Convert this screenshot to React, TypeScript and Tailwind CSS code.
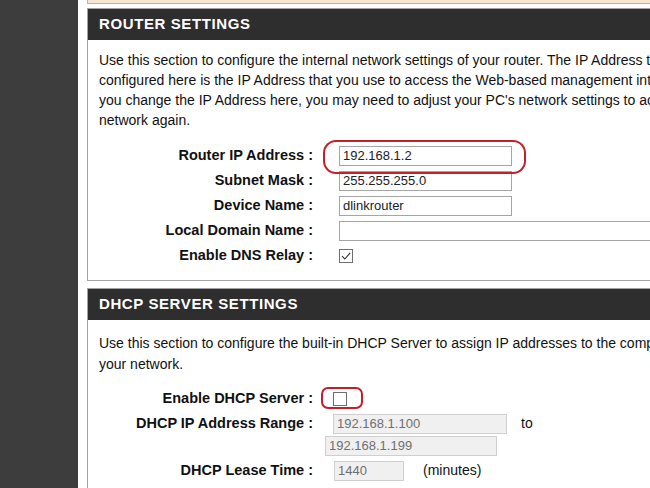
import type { ReactNode } from 'react'

function Section({ title, className, children }: { title: string; className?: string; children: ReactNode }) {
  return (
    <section className={`w-[720px] shrink-0 border border-[#a3a3a3] ${className ?? ''}`}>
      <div className="flex h-[31px] items-center bg-[#2e2e2e] pl-[11px] text-[15px] font-bold tracking-[0.6px] text-white">
        {title}
      </div>
      {children}
    </section>
  )
}

function Row({ label, children, className }: { label: string; children?: ReactNode; className?: string }) {
  return (
    <div className={`flex ${className ?? 'h-[25px] items-center'}`}>
      <div className="w-[225px] shrink-0 whitespace-nowrap text-right text-[14.5px] font-bold text-[#111]">{label}</div>
      {children}
    </div>
  )
}

function TextBox({ value, width, disabled }: { value: string; width: string; disabled?: boolean }) {
  return (
    <div
      className={`flex h-[20px] items-center whitespace-nowrap border px-[3px] text-[13px] ${width} ${
        disabled ? 'border-[#cfcfcf] bg-[#f0f0f0] text-[#6f6f6f]' : 'border-[#a5a5a5] bg-white text-[#222]'
      }`}
    >
      {value}
    </div>
  )
}

function CheckBox({ checked }: { checked?: boolean }) {
  return (
    <span className="flex h-[14px] w-[14px] items-center justify-center border border-[#6f6f6f] bg-white">
      {checked && (
        <svg width="12" height="12" viewBox="0 0 12 12" fill="none">
          <path d="M2 6.2 L4.8 9 L10.2 2.8" stroke="#333" strokeWidth="1.1" />
        </svg>
      )}
    </span>
  )
}

export default function App() {
  return (
    <div className="flex h-[488px] w-[650px] overflow-hidden bg-white font-['Liberation_Sans',Arial,sans-serif] text-[#111]">
      <aside className="w-[78px] shrink-0 bg-[#3d3d3d]" />

      <main className="flex min-w-0 flex-1 flex-col overflow-hidden pl-[9px]">
        {/* status strip above */}
        <div className="h-[4px] w-[720px] shrink-0 border-b border-l border-[#d2ac8c] bg-[#f7e5d6]" />

        {/* Router settings */}
        <Section title="ROUTER SETTINGS" className="mt-[4px]">
          <div className="px-[11px] pt-[10px] text-[14px] leading-[20px]">
            <p className="whitespace-nowrap">
              Use this section to configure the internal network settings of your router. The IP Address that is
            </p>
            <p className="whitespace-nowrap">
              configured here is the IP Address that you use to access the Web-based management interface. If
            </p>
            <p className="whitespace-nowrap">
              you change the IP Address here, you may need to adjust your PC's network settings to access the
            </p>
            <p className="whitespace-nowrap">network again.</p>
          </div>

          <div className="mt-[13px] pb-[12px]">
            <Row label="Router IP Address :">
              <div className="relative ml-[26px]">
                <TextBox value="192.168.1.2" width="w-[173px]" />
                <span className="absolute -left-[16px] -top-[6px] h-[34px] w-[203px] rounded-[13px] border-2 border-[#c3202c]" />
              </div>
            </Row>
            <Row label="Subnet Mask :">
              <div className="ml-[26px]">
                <TextBox value="255.255.255.0" width="w-[173px]" />
              </div>
            </Row>
            <Row label="Device Name :">
              <div className="ml-[26px]">
                <TextBox value="dlinkrouter" width="w-[173px]" />
              </div>
            </Row>
            <Row label="Local Domain Name :">
              <div className="ml-[26px]">
                <TextBox value="" width="w-[340px]" />
              </div>
            </Row>
            <Row label="Enable DNS Relay :">
              <div className="ml-[26px]">
                <CheckBox checked />
              </div>
            </Row>
          </div>
        </Section>

        {/* DHCP server settings */}
        <Section title="DHCP SERVER SETTINGS" className="mt-[7px]">
          <div className="px-[11px] pt-[13px] text-[14px] leading-[21px]">
            <p className="whitespace-nowrap">
              Use this section to configure the built-in DHCP Server to assign IP addresses to the computers on
            </p>
            <p className="whitespace-nowrap">your network.</p>
          </div>

          <div className="mt-[11px] pb-[20px]">
            <Row label="Enable DHCP Server :">
              <div className="relative ml-[20px]">
                <CheckBox />
                <span className="absolute -left-[12px] -top-[5px] h-[22px] w-[42px] rounded-[7px] border-2 border-[#c3202c]" />
              </div>
            </Row>
            <Row label="DHCP IP Address Range :">
              <div className="ml-[20px]">
                <TextBox value="192.168.1.100" width="w-[174px]" disabled />
              </div>
              <span className="ml-[14px] text-[14px]">to</span>
            </Row>
            <Row label="" className="h-[23px] items-start">
              <div className="ml-[12px]">
                <TextBox value="192.168.1.199" width="w-[172px]" disabled />
              </div>
            </Row>
            <Row label="DHCP Lease Time :" className="h-[23px] items-center">
              <div className="ml-[21px]">
                <TextBox value="1440" width="w-[70px]" disabled />
              </div>
              <span className="ml-[19px] text-[14px]">(minutes)</span>
            </Row>
          </div>
        </Section>
      </main>
    </div>
  )
}
